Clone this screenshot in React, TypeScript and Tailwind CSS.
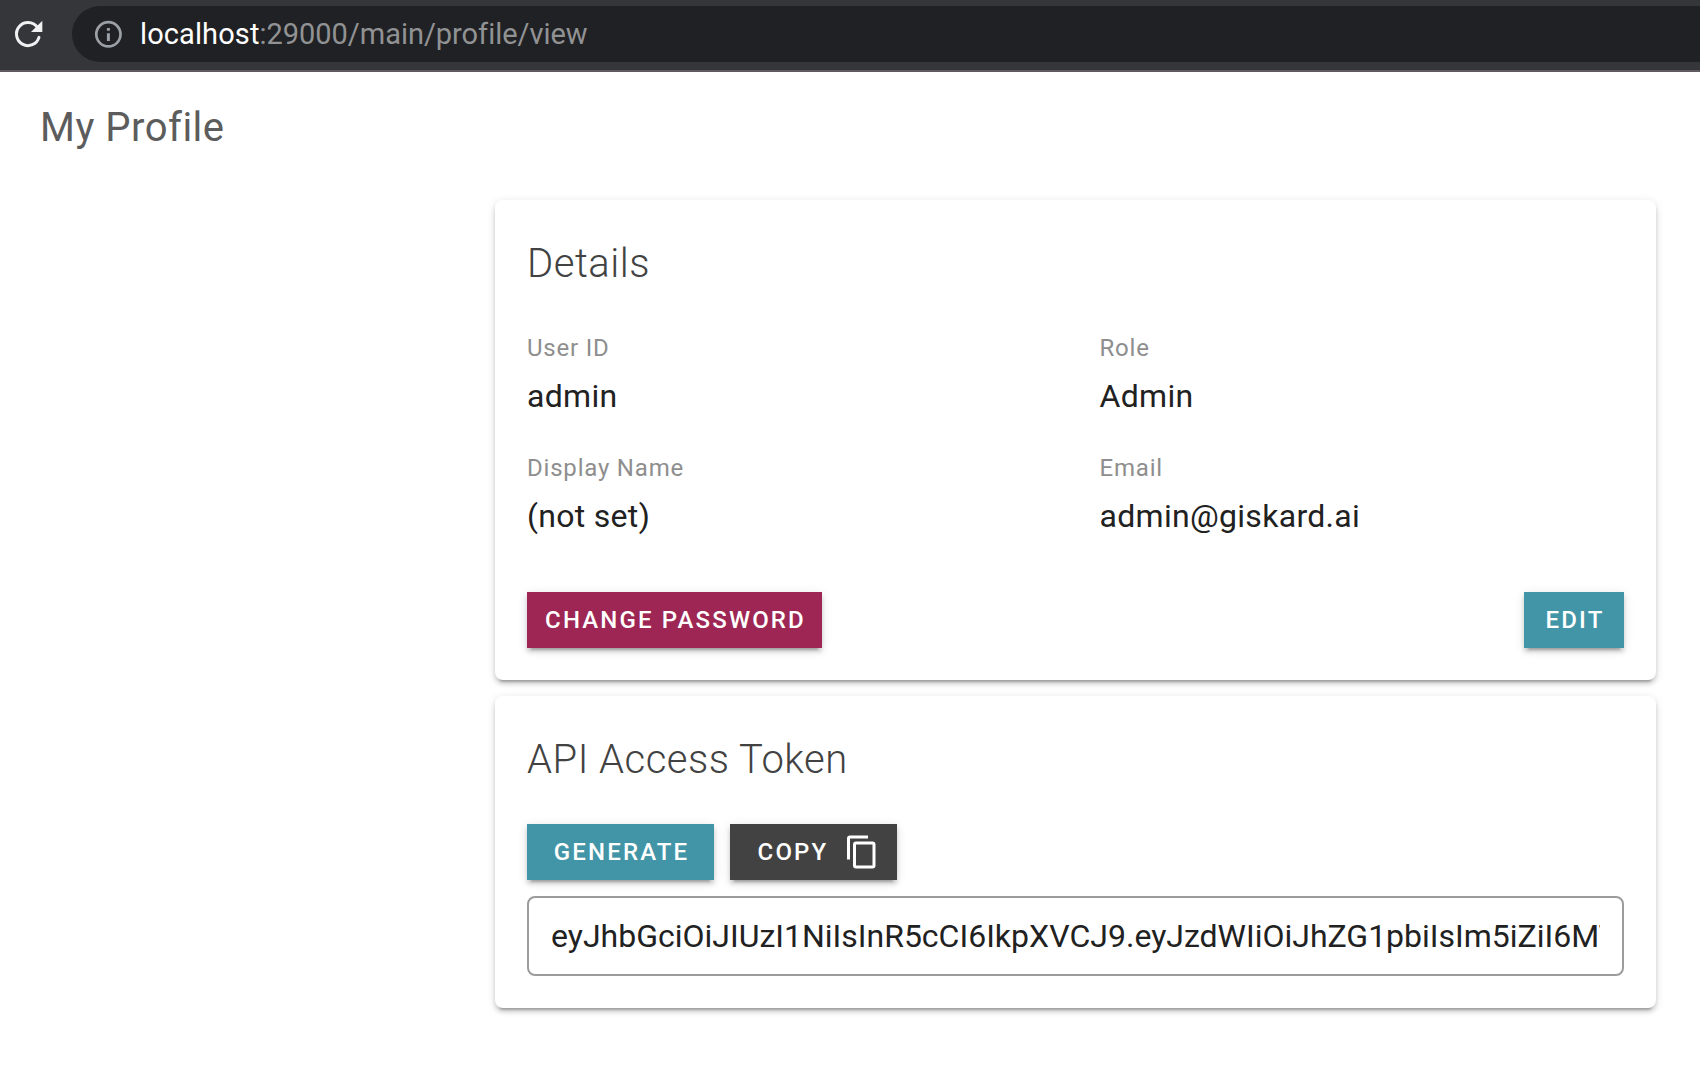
import type { ReactNode } from "react";

const TOKEN =
  "eyJhbGciOiJIUzI1NiIsInR5cCI6IkpXVCJ9.eyJzdWIiOiJhZG1pbiIsIm5iZiI6MTY2NDQ1NjAwMH0";

const PROFILE = [
  { label: "User ID", value: "admin" },
  { label: "Role", value: "Admin" },
  { label: "Display Name", value: "(not set)" },
  { label: "Email", value: "admin@giskard.ai" },
];

function ReloadIcon() {
  return (
    <svg className="ml-3 h-8 w-8 shrink-0" viewBox="12 18 32 32" fill="none">
      <path d="M37.2 27.2A11.5 11.5 0 1 0 39 37.4" stroke="#f1f1f2" strokeWidth="3" strokeLinecap="round" />
      <path d="M42.3 20.8V32H31Z" fill="#f1f1f2" />
    </svg>
  );
}

function InfoIcon() {
  return (
    <svg className="ml-5 h-8 w-8 shrink-0" viewBox="0 0 32 32" fill="none">
      <circle cx="16.4" cy="16.3" r="12.1" stroke="#9aa0a6" strokeWidth="2.7" />
      <path d="M14.9 10h3v2.8h-3zM14.9 15.2h3v7.8h-3z" fill="#9aa0a6" />
    </svg>
  );
}

function CopyIcon() {
  return (
    <svg className="h-9 w-9 shrink-0" viewBox="0 0 24 24" fill="currentColor">
      <path d="M19,21H8V7H19M19,5H8A2,2 0 0,0 6,7V21A2,2 0 0,0 8,23H19A2,2 0 0,0 21,21V7A2,2 0 0,0 19,5M16,1H4A2,2 0 0,0 2,3V17H4V3H16V1Z" />
    </svg>
  );
}

function Card({ title, children }: { title: string; children: ReactNode }) {
  return (
    <section className="rounded-lg bg-white p-8 shadow-[0_6px_2px_-4px_rgba(0,0,0,0.2),0_4px_4px_0_rgba(0,0,0,0.14),0_2px_10px_0_rgba(0,0,0,0.12)]">
      <h2 className="text-[40px] leading-[64px] font-light tracking-[0.0125em] text-[#424242]">{title}</h2>
      {children}
    </section>
  );
}

function Button({ className, children }: { className: string; children: ReactNode }) {
  return (
    <button
      className={`flex h-14 items-center justify-center text-2xl font-medium tracking-[0.0893em] whitespace-nowrap text-white shadow-[0_6px_2px_-4px_rgba(0,0,0,0.2),0_4px_4px_0_rgba(0,0,0,0.14),0_2px_10px_0_rgba(0,0,0,0.12)] ${className}`}
    >
      {children}
    </button>
  );
}

export default function App() {
  return (
    <div className="h-[1066px] w-[1700px] overflow-hidden bg-white font-[Roboto,sans-serif] text-[#212121]">
      <header className="flex h-[72px] border-b-2 border-[#5f5b61] bg-[#35363a] pt-1.5">
        <div className="flex h-14 w-[72px] items-center">
          <ReloadIcon />
        </div>
        <div className="flex h-14 flex-1 items-center rounded-l-full bg-[#202124]">
          <InfoIcon />
          <p className="ml-4 pt-0.5 text-[29px] tracking-[-0.03px] text-[#919293]">
            <span className="tracking-[0.1px] text-white">localhost</span>:29000/main/profile/view
          </p>
        </div>
      </header>

      <h1 className="mt-6 ml-10 text-[40px] leading-[64px] tracking-[0.0125em] text-[#5c5c5c]">My Profile</h1>

      <main className="mt-10 ml-[495px] flex w-[1161px] flex-col gap-4">
        <Card title="Details">
          <dl className="mt-8 grid grid-cols-2 gap-x-12 gap-y-7">
            {PROFILE.map(({ label, value }) => (
              <div key={label}>
                <dt className="text-2xl leading-10 tracking-[0.0333em] text-[#8e8e8e]">{label}</dt>
                <dd className="mt-1 text-[32px] leading-[48px] tracking-[0.0094em]">{value}</dd>
              </div>
            ))}
          </dl>
          <div className="mt-[52px] flex justify-between">
            <Button className="w-[295px] bg-[#9e2654] pl-0.5">CHANGE PASSWORD</Button>
            <Button className="w-[100px] bg-[#4295a6] pl-0.5">EDIT</Button>
          </div>
        </Card>

        <Card title="API Access Token">
          <div className="mt-8 flex gap-4">
            <Button className="w-[187px] bg-[#4295a6] pl-0.5">GENERATE</Button>
            <Button className="w-[167px] gap-4 bg-[#424242] pl-[11px]">
              COPY
              <CopyIcon />
            </Button>
          </div>
          <div className="mt-4 flex h-20 items-center rounded-lg border-2 border-[#9c9c9c] px-[22px]">
            <p className="flex-1 overflow-hidden text-[32px] leading-[48px] whitespace-nowrap">{TOKEN}</p>
          </div>
        </Card>
      </main>
    </div>
  );
}
